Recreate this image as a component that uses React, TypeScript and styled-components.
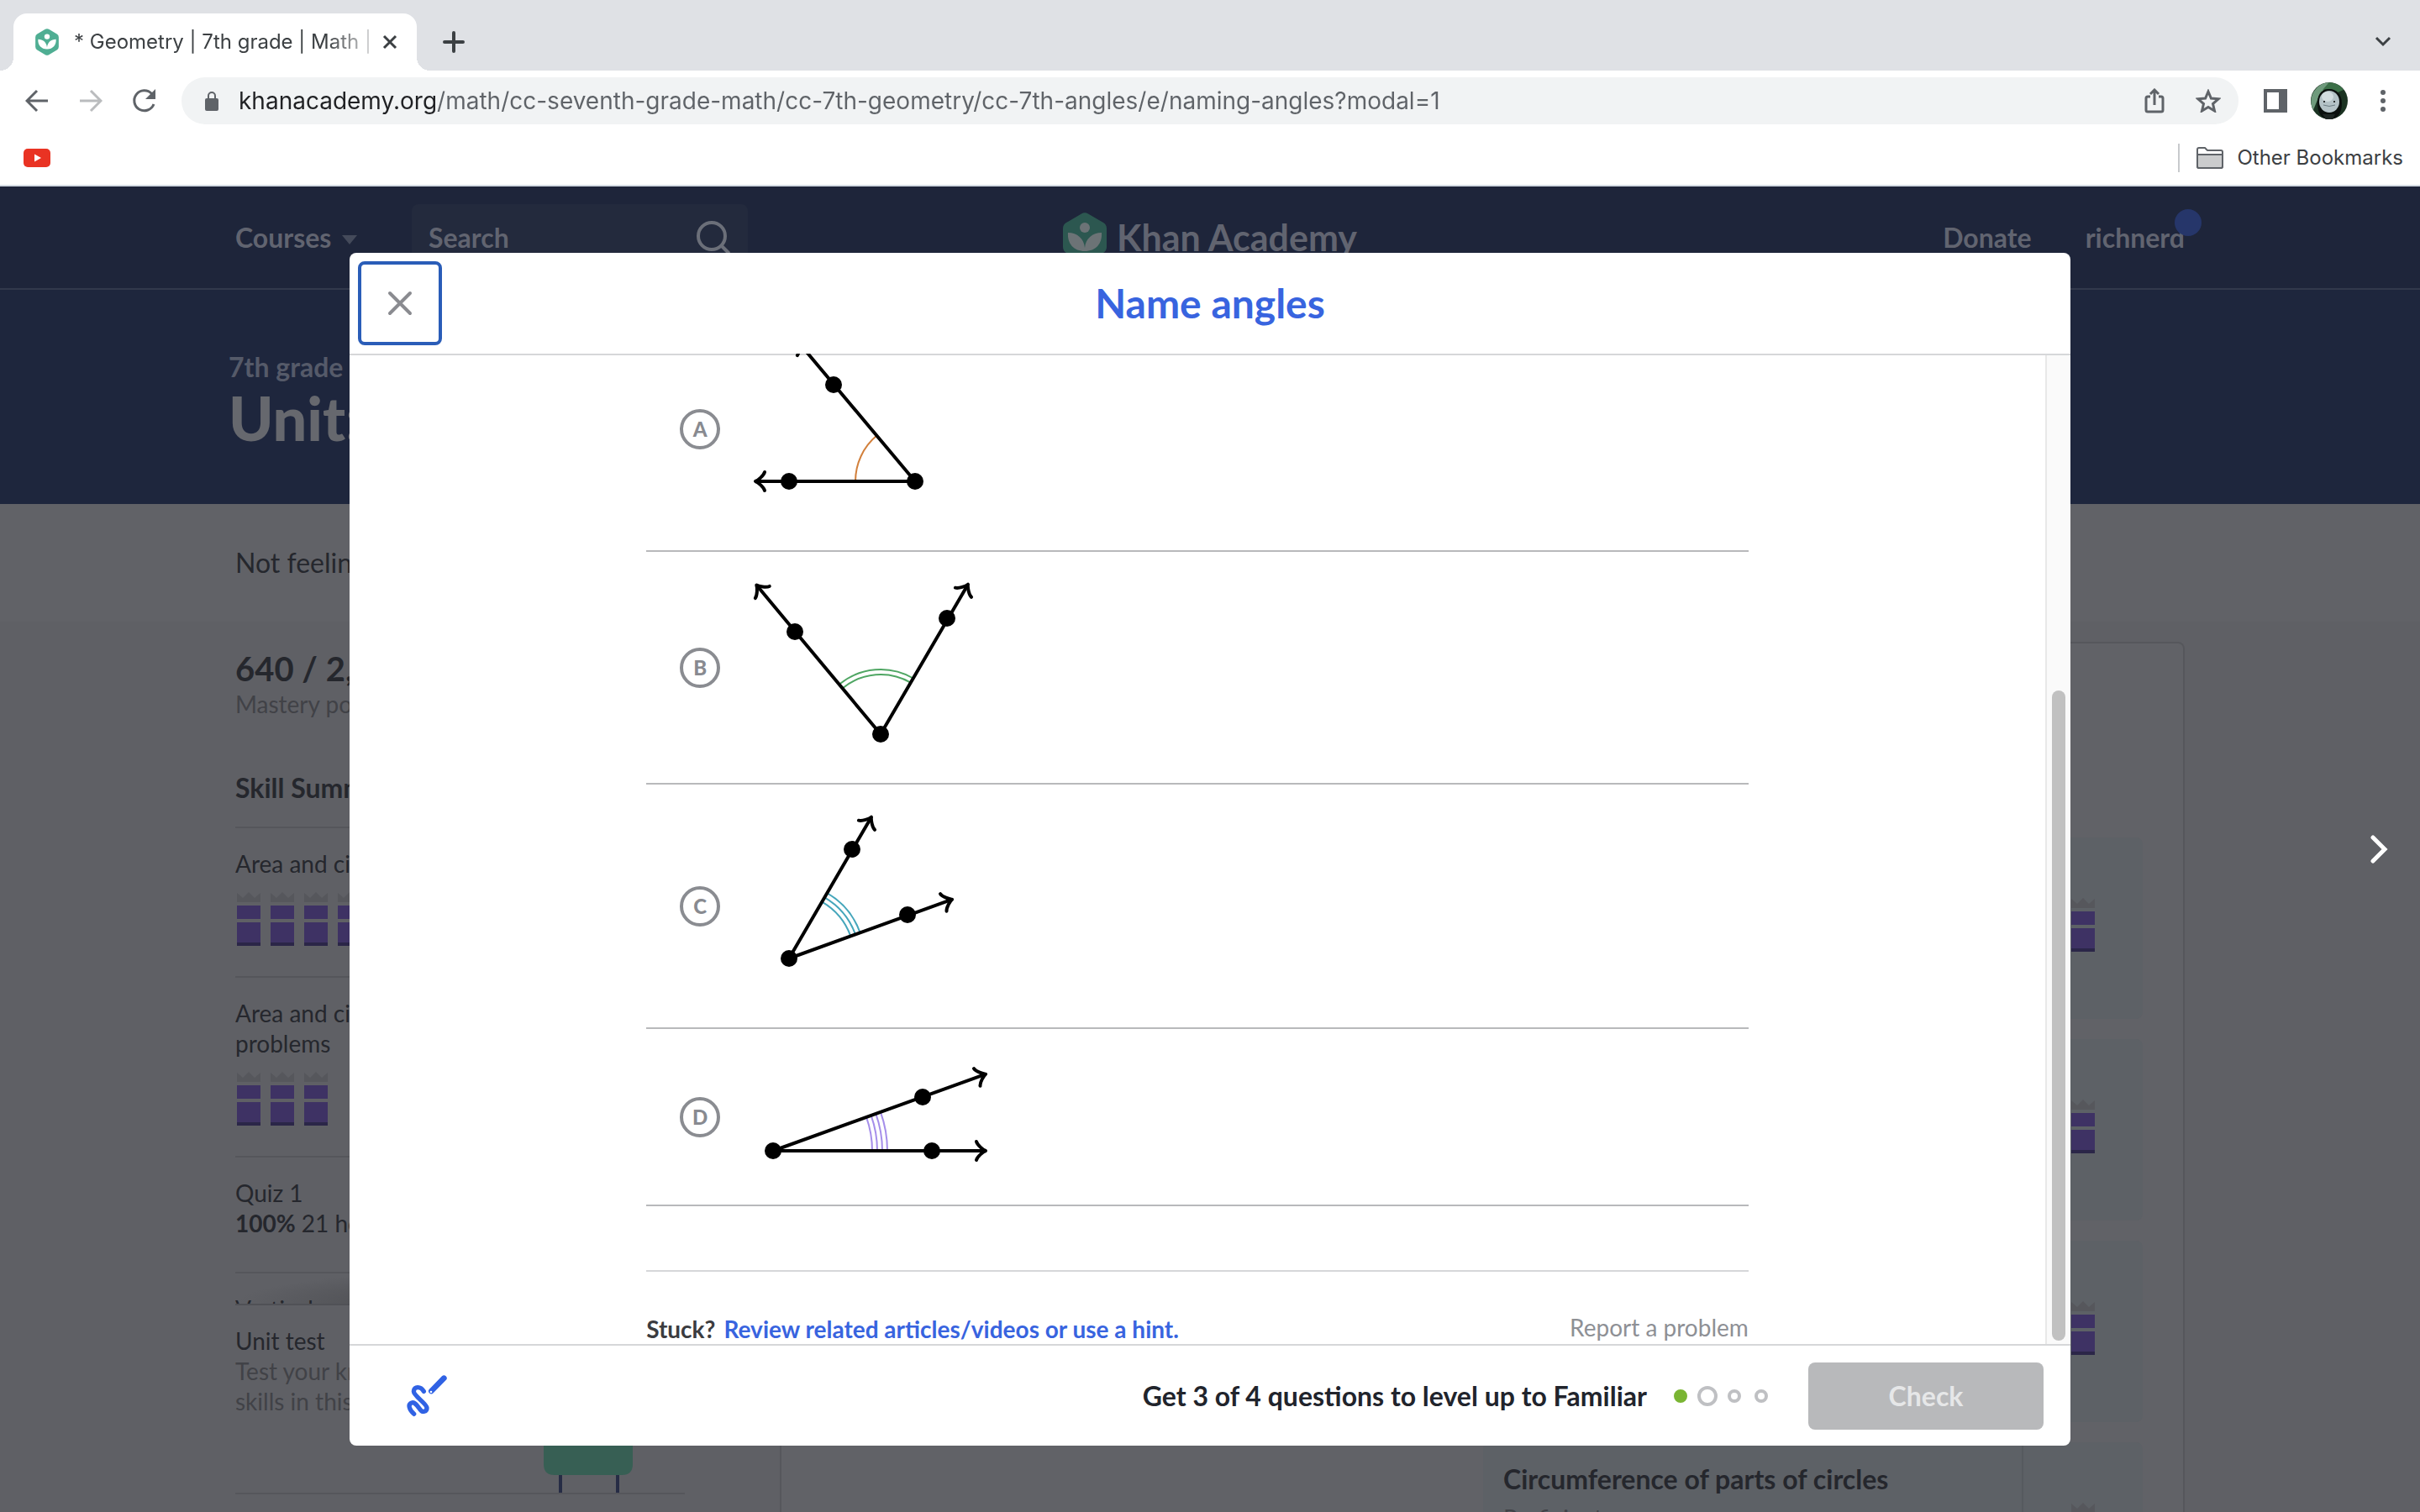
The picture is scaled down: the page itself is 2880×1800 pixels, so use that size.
import React from "react";
import styled, { createGlobalStyle } from "styled-components";

const GlobalStyle = createGlobalStyle`
  *, *::before, *::after { box-sizing: border-box; }
  html, body, #root { height: 100%; margin: 0; }
  body { font-family: Lato, "Noto Sans", sans-serif; overflow: hidden; }
  button, input { font: inherit; color: inherit; }
  button { border: 0; background: none; padding: 0; cursor: pointer; }
  h1, h2, h3, p, ul { margin: 0; padding: 0; }
  a { text-decoration: none; color: inherit; }
  svg { display: block; flex: none; }
`;

const Screen = styled.div`
  display: flex;
  flex-direction: column;
  height: 100vh;
  overflow: hidden;
`;

/* ---------- Browser chrome ---------- */

const Chrome = styled.header`
  flex: none;
  background: #fff;
  color: #3c4043;
  font-family: Inter, sans-serif;
  border-bottom: 2px solid #d5dbe3;
`;

const TabStrip = styled.div`
  display: flex;
  align-items: center;
  height: 84px;
  padding: 16px 12px 0 16px;
  background: #dfe1e5;
`;

const Tab = styled.div`
  position: relative;
  display: flex;
  align-items: center;
  width: 480px;
  height: 68px;
  padding: 0 20px 0 26px;
  border-radius: 16px 16px 0 0;
  background: #fff;
  &::before,
  &::after {
    content: "";
    position: absolute;
    bottom: 0;
    width: 16px;
    height: 16px;
  }
  &::before {
    right: 100%;
    background: radial-gradient(circle at 0 0, transparent 16px, #fff 16px);
  }
  &::after {
    left: 100%;
    background: radial-gradient(circle at 100% 0, transparent 16px, #fff 16px);
  }
`;

const TabTitle = styled.span`
  flex: 1;
  min-width: 0;
  margin-left: 18px;
  white-space: nowrap;
  font-size: 24px;
  line-height: 32px;
  mask-image: linear-gradient(90deg, #000 85%, transparent 104%);
`;

const TabClose = styled.button`
  display: grid;
  place-items: center;
  flex: none;
  width: 24px;
  height: 24px;
  margin-left: 10px;
`;

const StripButton = styled.button<{ $end?: boolean }>`
  display: grid;
  place-items: center;
  width: 64px;
  height: 64px;
  margin-left: ${(p) => (p.$end ? "auto" : "12px")};
`;

const Toolbar = styled.div`
  display: flex;
  align-items: center;
  height: 72px;
  padding: 0 12px;
`;

const ToolButton = styled.button`
  display: grid;
  place-items: center;
  flex: none;
  width: 64px;
  height: 56px;
  color: #5f6368;
`;

const AddressBar = styled.div`
  display: flex;
  flex: 1;
  align-items: center;
  height: 56px;
  margin: 0 12px;
  padding: 0 4px 0 26px;
  border-radius: 28px;
  background: #f1f3f4;
`;

const AddressInput = styled.input`
  flex: 1;
  min-width: 0;
  margin-left: 22px;
  padding: 0;
  border: 0;
  outline: 0;
  font-size: 28px;
  line-height: 40px;
  color: transparent;
  background: linear-gradient(90deg, #202124 236px, #5f6368 236px);
  background-clip: text;
  -webkit-background-clip: text;
`;

const Bookmarks = styled.nav`
  display: flex;
  align-items: center;
  justify-content: space-between;
  height: 64px;
  padding: 0 20px 0 28px;
`;

const OtherBookmarks = styled.button`
  display: flex;
  align-items: center;
  gap: 16px;
  height: 34px;
  padding-left: 20px;
  border-left: 2px solid #c8cacd;
  font-size: 24px;
  line-height: 32px;
`;

/* ---------- Dimmed course page ---------- */

const Stage = styled.div`
  position: relative;
  flex: 1;
  min-height: 0;
  overflow: hidden;
`;

const CoursePage = styled.div`
  display: flex;
  flex-direction: column;
  height: 100%;
  background: #5f6065;
  color: #25272d;
`;

const SiteNav = styled.nav`
  display: grid;
  grid-template-columns: 1fr auto 1fr;
  align-items: center;
  flex: none;
  height: 123px;
  padding: 0 280px;
  border-bottom: 2px solid #32394b;
  background: #1e253a;
  color: #616470;
  font-size: 32px;
  font-weight: 700;
  line-height: 40px;
`;

const NavLeft = styled.div`
  display: flex;
  align-items: center;
`;

const NavRight = styled.div`
  display: flex;
  justify-content: flex-end;
  gap: 64px;
`;

const CoursesButton = styled.button`
  display: flex;
  align-items: center;
  gap: 12px;
  width: 210px;
  font-weight: 700;
`;

const SearchBox = styled.label`
  display: flex;
  align-items: center;
  width: 400px;
  height: 80px;
  padding: 0 20px;
  border-radius: 8px;
  background: #232a3d;
`;

const SearchInput = styled.input`
  flex: 1;
  min-width: 0;
  padding: 0;
  border: 0;
  outline: 0;
  background: none;
  &::placeholder {
    color: #616470;
    opacity: 1;
  }
`;

const Brand = styled.a`
  display: flex;
  align-items: center;
  gap: 12px;
  font-size: 43px;
  line-height: 48px;
`;

const UserLink = styled.a`
  position: relative;
  &::after {
    content: "";
    position: absolute;
    top: -14px;
    right: -20px;
    width: 32px;
    height: 32px;
    border-radius: 50%;
    background: #26366a;
  }
`;

const Hero = styled.section`
  flex: none;
  height: 255px;
  padding: 72px 272px 0;
  background: #1e263d;
  white-space: nowrap;
`;

const Crumb = styled.a`
  display: block;
  color: #555a69;
  font-size: 32px;
  font-weight: 700;
  line-height: 40px;
`;

const HeroTitle = styled.h1`
  color: #66686e;
  font-size: 72px;
  font-weight: 900;
  line-height: 80px;
`;

const Banner = styled.p`
  flex: none;
  padding: 50px 280px;
  background: #616267;
  font-size: 32px;
  line-height: 40px;
`;

const Columns = styled.div`
  display: grid;
  grid-template-columns: 648px 1fr;
  flex: 1;
  min-height: 0;
  padding: 0 280px;
`;

const Sidebar = styled.aside`
  display: flex;
  flex-direction: column;
  min-height: 0;
  padding: 32px 113px 21px 0;
  white-space: nowrap;
`;

const Points = styled.p`
  font-size: 40px;
  font-weight: 700;
  line-height: 48px;
`;

const Muted = styled.p`
  color: #414247;
  font-size: 28px;
  line-height: 36px;
`;

const SkillHeading = styled.h2`
  margin: 64px 0 28px;
  font-size: 32px;
  line-height: 36px;
`;

const SkillList = styled.ul`
  flex: 1;
  min-height: 0;
  overflow: hidden;
  list-style: none;
  background: radial-gradient(ellipse 60% 40px at 60% 100%, #4d4e52 30%, transparent);
`;

const Skill = styled.li<{ $quiz?: boolean }>`
  padding: 24px 0 ${(p) => (p.$quiz ? "40px" : "36px")};
  border-top: 2px solid #55565b;
  font-size: 28px;
  line-height: 36px;
`;

const Blocks = styled.div`
  display: flex;
  gap: 12px;
  margin: 16px 0 0 2px;
`;

const UnitTest = styled.div`
  display: flex;
  flex: none;
  justify-content: space-between;
  height: 227px;
  padding: 24px 62px 0 0;
  border-top: 2px solid #505156;
  border-bottom: 2px solid #55565b;
  font-size: 28px;
  line-height: 36px;
`;

const Creature = styled.svg`
  align-self: flex-end;
`;

const LessonCard = styled.section`
  display: flex;
  flex-direction: column;
  align-items: flex-end;
  gap: 24px;
  margin-top: 24px;
  padding: 231px 48px 0 0;
  border: 2px solid #56575c;
  border-bottom: 0;
  border-radius: 8px 8px 0 0;
  background: #616267;
  overflow: hidden;
`;

const Lesson = styled.article`
  display: grid;
  grid-template-columns: 1fr 142px;
  flex: none;
  width: 785px;
  height: 216px;
  border-radius: 8px;
  background: #5d6166;
`;

const LessonText = styled.div`
  padding: 24px;
  border-right: 2px solid #565a5f;
`;

const LessonTitle = styled.h3`
  margin-bottom: 8px;
  font-size: 32px;
  line-height: 40px;
`;

const LessonLevel = styled.div`
  display: grid;
  justify-content: center;
  padding-top: 72px;
`;

/* ---------- Exercise dialog ---------- */

const Overlay = styled.div`
  position: absolute;
  inset: 0;
  display: flex;
  padding: 79px 416px;
`;

const Dialog = styled.section`
  display: flex;
  flex: 1;
  flex-direction: column;
  min-width: 0;
  border-radius: 8px;
  background: #fff;
  overflow: hidden;
`;

const DialogHeader = styled.header`
  display: grid;
  grid-template-columns: 1fr auto 1fr;
  align-items: center;
  flex: none;
  height: 120px;
  padding: 0 10px;
`;

const CloseButton = styled.button`
  display: grid;
  place-items: center;
  width: 100px;
  height: 100px;
  border: 4px solid #2a5db8;
  border-radius: 8px;
`;

const DialogTitle = styled.h1`
  color: #3864df;
  font-size: 48px;
  line-height: 56px;
`;

const DialogBody = styled.div`
  display: flex;
  flex: 1;
  min-height: 0;
  box-shadow: inset 0 2px #d6d7d9;
  overflow: hidden;
`;

const Scroller = styled.div`
  display: flex;
  flex: 1;
  flex-direction: column;
  justify-content: flex-end;
  min-width: 0;
`;

const Content = styled.form`
  width: 65%;
  margin: 0 auto;
`;

const Choice = styled.label`
  display: flex;
  align-items: center;
  gap: 24px;
  padding: 36px 40px;
  border-bottom: 2px solid #b8b9bb;
`;

const Letter = styled.span`
  display: grid;
  place-items: center;
  color: #888a90;
  font-size: 24px;
  font-weight: 900;
  line-height: 28px;
  & > * {
    grid-area: 1 / 1;
  }
`;

const Radio = styled.input`
  appearance: none;
  width: 48px;
  height: 48px;
  margin: 0;
  border: 4px solid #8a8c91;
  border-radius: 50%;
`;

const HelpRow = styled.div`
  display: flex;
  align-items: flex-start;
  justify-content: space-between;
  margin-top: 76px;
  padding-top: 48px;
  border-top: 2px solid #d6d7d9;
  font-size: 28px;
  line-height: 36px;
`;

const Stuck = styled.p`
  display: flex;
  gap: 10px;
  padding-top: 2px;
  color: #3b3c40;
  font-weight: 700;
`;

const HintLink = styled.a`
  color: #3864df;
`;

const ReportLink = styled.a`
  color: #8e9095;
`;

const ScrollTrack = styled.div`
  display: flex;
  flex-direction: column;
  justify-content: flex-end;
  align-items: center;
  width: 30px;
  margin-top: 2px;
  padding-bottom: 4px;
  border-left: 2px solid #e8e8e8;
  background: #fafafa;
`;

const ScrollThumb = styled.div`
  width: 16px;
  height: 66%;
  border-radius: 8px;
  background: #c1c1c1;
`;

const DialogFooter = styled.footer`
  display: flex;
  align-items: center;
  flex: none;
  height: 121px;
  padding: 0 32px 0 66px;
  border-top: 2px solid #d6d7d9;
`;

const Goal = styled.p`
  margin-left: auto;
  color: #21242c;
  font-size: 32px;
  font-weight: 700;
  line-height: 40px;
`;

const Progress = styled.div`
  display: grid;
  grid-template-columns: repeat(4, 24px);
  place-items: center;
  gap: 8px;
  margin: 0 44px 0 28px;
`;

const Dot = styled.span<{ $state: "done" | "current" | "todo" }>`
  width: ${(p) => (p.$state === "current" ? "24px" : "16px")};
  height: ${(p) => (p.$state === "current" ? "24px" : "16px")};
  border: 4px solid ${(p) => (p.$state === "done" ? "#7ab533" : "#bfc0c3")};
  border-radius: 50%;
  background: ${(p) => (p.$state === "done" ? "#7ab533" : "#fff")};
`;

const CheckButton = styled.button`
  width: 280px;
  height: 80px;
  border-radius: 8px;
  background: #b8b9bb;
  color: #e6e7e8;
  font-size: 32px;
  font-weight: 700;
  line-height: 40px;
`;

const NextButton = styled.button`
  position: absolute;
  top: 50%;
  right: 32px;
  transform: translateY(-50%);
`;

/* ---------- Drawings ---------- */

type Pt = [number, number];

function Ray({ from, tip }: { from: Pt; tip: Pt }) {
  const dx = tip[0] - from[0];
  const dy = tip[1] - from[1];
  const len = Math.hypot(dx, dy);
  const angle = (Math.atan2(dy, dx) * 180) / Math.PI;
  return (
    <g
      transform={`translate(${from[0]} ${from[1]}) rotate(${angle})`}
      fill="none"
      stroke="#000"
      strokeWidth="4"
      strokeLinecap="round"
      strokeLinejoin="round"
    >
      <path d={`M0 0H${len - 4}`} />
      <path
        transform={`translate(${len - 2} 0)`}
        d="M-11 -11C-10 -7 -3 -1 0 0C-3 1 -10 7 -11 11"
      />
    </g>
  );
}

type AngleProps = {
  top: number;
  height: number;
  vertex: Pt;
  points: [Pt, Pt];
  tips: [Pt, Pt];
  radii: number[];
  color: string;
};

function Angle({ top, height, vertex, points, tips, radii, color }: AngleProps) {
  const [a, b] = tips.map((t) => Math.atan2(t[1] - vertex[1], t[0] - vertex[0]));
  const at = (r: number, t: number) =>
    `${vertex[0] + r * Math.cos(t)} ${vertex[1] + r * Math.sin(t)}`;
  return (
    <svg width="320" height={height} viewBox={`881 ${top} 320 ${height}`} aria-hidden="true">
      {radii.map((r) => (
        <path
          key={r}
          d={`M${at(r, a)}A${r} ${r} 0 0 1 ${at(r, b)}`}
          fill="none"
          stroke={color}
          strokeWidth="2"
        />
      ))}
      {tips.map((t, i) => (
        <Ray key={i} from={vertex} tip={t} />
      ))}
      {[vertex, ...points].map((p, i) => (
        <circle key={i} cx={p[0]} cy={p[1]} r="10" />
      ))}
    </svg>
  );
}

const choices: (AngleProps & { letter: string })[] = [
  {
    letter: "A", top: 402, height: 217, vertex: [1089, 573],
    points: [[939, 573], [992, 458]], tips: [[897, 573], [949, 406]],
    radii: [71], color: "#d2803c",
  },
  {
    letter: "B", top: 693, height: 203, vertex: [1048, 874],
    points: [[946, 752], [1127, 736]], tips: [[899, 695], [1153, 694]],
    radii: [71, 77], color: "#4fa663",
  },
  {
    letter: "C", top: 970, height: 217, vertex: [939, 1141],
    points: [[1014, 1011], [1080, 1089]], tips: [[1038, 971], [1135, 1070]],
    radii: [78, 84, 90], color: "#45a6bb",
  },
  {
    letter: "D", top: 1261, height: 137, vertex: [920, 1370],
    points: [[1098, 1306], [1109, 1370]], tips: [[1175, 1278], [1175, 1370]],
    radii: [118, 124, 130, 136], color: "#a58eea",
  },
];

function Leaf({ width, height, dim }: { width: number; height: number; dim?: boolean }) {
  const ink = dim ? "#6c7376" : "#fff";
  return (
    <svg width={width} height={height} viewBox="0 0 52 60" aria-hidden="true">
      <path
        d="M22 1.5q4-2.4 8 0l18 10.5q4 2.4 4 7v22q0 4.600-4 7L30 58.500q-4 2.400-8 0L4 48q-4-2.400-4-7V19q0-4.600 4-7z"
        fill={dim ? "#2c5750" : "#4fae93"}
      />
      <circle cx="26" cy="18" r="6" fill={ink} />
      <path d="M6 24c11 0 19 7 20 18c1-11 9-18 20-18c1 13-7 22-20 22S5 37 6 24z" fill={ink} />
    </svg>
  );
}

function Block() {
  return (
    <svg width="28" height="64" viewBox="0 0 28 64" aria-hidden="true">
      <path d="M0 1l7 6 7-7 7 7 7-6v11H0z" fill="#56575c" />
      <path d="M0 16h28v16H0zM0 36h28v24H0z" fill="#3e3264" />
      <path d="M0 60h28v4H0z" fill="#2b2648" />
    </svg>
  );
}

export default function App() {
  return (
    <Screen>
      <GlobalStyle />
      <Chrome>
        <TabStrip>
          <Tab>
            <Leaf width={28} height={32} />
            <TabTitle>* Geometry | 7th grade | Math |</TabTitle>
            <TabClose aria-label="Close tab">
              <svg width="18" height="18" viewBox="0 0 18 18" stroke="#3c4043" strokeWidth="3">
                <path d="M2 2l14 14M16 2L2 16" />
              </svg>
            </TabClose>
          </Tab>
          <StripButton aria-label="New tab">
            <svg width="26" height="26" viewBox="0 0 26 26" stroke="#3c4043" strokeWidth="4" strokeLinecap="round">
              <path d="M13 2v22M2 13h22" />
            </svg>
          </StripButton>
          <StripButton $end aria-label="Search tabs">
            <svg width="20" height="14" viewBox="0 0 20 14" fill="none" stroke="#3c4043" strokeWidth="3">
              <path d="M2 2l8 8 8-8" />
            </svg>
          </StripButton>
        </TabStrip>
        <Toolbar>
          <ToolButton aria-label="Back">
            <svg width="28" height="28" viewBox="0 0 28 28" fill="none" stroke="#5f6368" strokeWidth="3">
              <path d="M27 14H3M14 2L2 14l12 12" />
            </svg>
          </ToolButton>
          <ToolButton aria-label="Forward">
            <svg width="28" height="28" viewBox="0 0 28 28" fill="none" stroke="#babcbe" strokeWidth="3">
              <path d="M1 14h24M14 2l12 12-12 12" />
            </svg>
          </ToolButton>
          <ToolButton aria-label="Reload">
            <svg width="30" height="30" viewBox="0 0 30 30" fill="none" stroke="#5f6368" strokeWidth="3">
              <path d="M26 19A12 12 0 1 1 23.500 6.500" />
              <path d="M28 1v12H16z" fill="#5f6368" stroke="none" />
            </svg>
          </ToolButton>
          <AddressBar>
            <svg width="20" height="24" viewBox="0 0 20 24" fill="none">
              <rect x="2" y="9" width="16" height="15" rx="2" fill="#5f6368" />
              <path d="M6 10V6a4 4 0 0 1 8 0v4" stroke="#5f6368" strokeWidth="2" />
            </svg>
            <AddressInput
              aria-label="Address"
              readOnly
              value="khanacademy.org/math/cc-seventh-grade-math/cc-7th-geometry/cc-7th-angles/e/naming-angles?modal=1"
            />
            <ToolButton aria-label="Share">
              <svg width="24" height="30" viewBox="0 0 24 30" fill="none" stroke="#5f6368" strokeWidth="3">
                <path d="M7 10H4a2 2 0 0 0-2 2v14a2 2 0 0 0 2 2h16a2 2 0 0 0 2-2V12a2 2 0 0 0-2-2h-3M12 20V3M7 7l5-5 5 5" />
              </svg>
            </ToolButton>
            <ToolButton aria-label="Bookmark this page">
              <svg width="30" height="28" viewBox="0 0 30 28" fill="none" stroke="#5f6368" strokeWidth="3">
                <path d="M15 3l3.400 8 8.600.8-6.500 5.700 2 8.500-7.500-4.500L7.500 26l2-8.500L3 11.800l8.600-.8z" />
              </svg>
            </ToolButton>
          </AddressBar>
          <ToolButton aria-label="Side panel">
            <svg width="28" height="28" viewBox="0 0 28 28">
              <path d="M0 0h28v28H0z M4 4v20h14V4z" fill="#5f6368" fillRule="evenodd" />
            </svg>
          </ToolButton>
          <ToolButton aria-label="Profile">
            <svg width="44" height="44" viewBox="0 0 44 44">
              <circle cx="22" cy="22" r="22" fill="#1b3322" />
              <path d="M6 8A22 22 0 0 1 22 0L10 16 3 33A22 22 0 0 1 6 8z" fill="#6f9a7c" />
              <path d="M22 0Q34 1 39 9L32 12Q26 6 14 9z" fill="#3c7048" />
              <path d="M8 24C8 12 15 8 22 8s15 5 15 17-5 19-15 19S8 36 8 24z" fill="#0b100e" />
              <ellipse cx="22" cy="23" rx="12" ry="13" fill="#b4c2c7" />
              <ellipse cx="20" cy="17" rx="7" ry="6" fill="#d3dde0" />
              <circle cx="16" cy="23" r="1" />
              <circle cx="28" cy="23" r="1" />
              <path d="M15 27q7 3 14 0" fill="none" stroke="#6d7d84" strokeWidth="1" />
              <path d="M14 38h15l-3 6h-8z" fill="#1d2422" />
            </svg>
          </ToolButton>
          <ToolButton aria-label="Menu">
            <svg width="6" height="26" viewBox="0 0 6 26" fill="#5f6368">
              <circle cx="3" cy="3" r="3" />
              <circle cx="3" cy="13" r="3" />
              <circle cx="3" cy="23" r="3" />
            </svg>
          </ToolButton>
        </Toolbar>
        <Bookmarks>
          <a href="#youtube" aria-label="YouTube">
            <svg width="32" height="22" viewBox="0 0 32 22">
              <rect width="32" height="22" rx="5" fill="#e93323" />
              <path d="M13 6.500l8 4.500-8 4.500z" fill="#fff" />
            </svg>
          </a>
          <OtherBookmarks>
            <svg width="32" height="26" viewBox="0 0 32 26" stroke="#5f6368" strokeWidth="2">
              <path d="M1 23V3q0-2 2-2h7l3 3h16q2 0 2 2v17q0 2-2 2H3q-2 0-2-2z" fill="#fff" />
              <path d="M1 9h30v14q0 2-2 2H3q-2 0-2-2z" fill="#cbcccd" />
            </svg>
            Other Bookmarks
          </OtherBookmarks>
        </Bookmarks>
      </Chrome>

      <Stage>
        <CoursePage>
          <SiteNav>
            <NavLeft>
              <CoursesButton>
                Courses
                <svg width="20" height="18" viewBox="0 0 20 18" fill="#444a5a">
                  <path d="M1 6h18l-9 11z" />
                </svg>
              </CoursesButton>
              <SearchBox>
                <SearchInput type="text" placeholder="Search" aria-label="Search" />
                <svg width="42" height="42" viewBox="0 0 42 42" fill="none" stroke="#6b6f79" strokeWidth="4" strokeLinecap="round">
                  <circle cx="19" cy="19" r="16" />
                  <path d="M31 31l8 8" />
                </svg>
              </SearchBox>
            </NavLeft>
            <Brand href="#home">
              <Leaf width={52} height={60} dim />
              Khan Academy
            </Brand>
            <NavRight>
              <a href="#donate">Donate</a>
              <UserLink href="#profile">richnerd</UserLink>
            </NavRight>
          </SiteNav>
          <Hero>
            <Crumb href="#grade">7th grade</Crumb>
            <HeroTitle>Unit:</HeroTitle>
          </Hero>
          <Banner>Not feeling</Banner>
          <Columns>
            <Sidebar>
              <Points>640 / 2,</Points>
              <Muted>Mastery poi</Muted>
              <SkillHeading>Skill Summ</SkillHeading>
              <SkillList>
                <Skill>
                  Area and cir
                  <Blocks>
                    <Block />
                    <Block />
                    <Block />
                    <Block />
                  </Blocks>
                </Skill>
                <Skill>
                  Area and cir
                  <br />
                  problems
                  <Blocks>
                    <Block />
                    <Block />
                    <Block />
                  </Blocks>
                </Skill>
                <Skill $quiz>
                  Quiz 1
                  <br />
                  <b>100%</b> 21 ho
                </Skill>
                <Skill>Vertical</Skill>
              </SkillList>
              <UnitTest>
                <div>
                  Unit test
                  <Muted>Test your kn</Muted>
                  <Muted>skills in this</Muted>
                </div>
                <Creature width="106" height="90" viewBox="0 0 106 90" aria-hidden="true">
                  <path d="M20 66v24M88 66v24" stroke="#262c45" strokeWidth="4" />
                  <path d="M0 0h106v56q0 13-13 13H13Q0 69 0 56z" fill="#375f54" />
                </Creature>
              </UnitTest>
            </Sidebar>
            <LessonCard>
              {["", "", "", "Circumference of parts of circles"].map((title, i) => (
                <Lesson key={i}>
                  <LessonText>
                    {title && <LessonTitle>{title}</LessonTitle>}
                    {title && <Muted>Proficient</Muted>}
                  </LessonText>
                  <LessonLevel>
                    <Block />
                  </LessonLevel>
                </Lesson>
              ))}
            </LessonCard>
          </Columns>
        </CoursePage>

        <Overlay>
          <Dialog role="dialog" aria-labelledby="dialog-title">
            <DialogHeader>
              <CloseButton aria-label="Close">
                <svg width="30" height="30" viewBox="0 0 30 30" stroke="#8a8b90" strokeWidth="4" strokeLinecap="round">
                  <path d="M3 3l24 24M27 3L3 27" />
                </svg>
              </CloseButton>
              <DialogTitle id="dialog-title">Name angles</DialogTitle>
            </DialogHeader>
            <DialogBody>
              <Scroller>
                <Content>
                  {choices.map(({ letter, ...angle }) => (
                    <Choice key={letter}>
                      <Letter>
                        <Radio type="radio" name="answer" value={letter} />
                        <span>{letter}</span>
                      </Letter>
                      <Angle {...angle} />
                    </Choice>
                  ))}
                  <HelpRow>
                    <Stuck>
                      Stuck?
                      <HintLink href="#hint">Review related articles/videos or use a hint.</HintLink>
                    </Stuck>
                    <ReportLink href="#report">Report a problem</ReportLink>
                  </HelpRow>
                </Content>
              </Scroller>
              <ScrollTrack>
                <ScrollThumb />
              </ScrollTrack>
            </DialogBody>
            <DialogFooter>
              <button aria-label="Scratchpad">
                <svg width="52" height="52" viewBox="36 34 156 156" fill="none" stroke="#3062e4" strokeLinecap="round">
                  <path
                    d="M103 95C92 76 68 76 67 95C67 112 113 138 114 154C114 168 98 172 90 160C80 148 72 132 60 136C44 142 52 162 68 176"
                    strokeWidth="16"
                  />
                  <path d="M130 94L175 48" strokeWidth="20" />
                  <circle cx="129" cy="97" r="4" fill="#fff" stroke="none" />
                </svg>
              </button>
              <Goal>Get 3 of 4 questions to level up to Familiar</Goal>
              <Progress role="img" aria-label="1 of 4 questions done">
                <Dot $state="done" />
                <Dot $state="current" />
                <Dot $state="todo" />
                <Dot $state="todo" />
              </Progress>
              <CheckButton disabled>Check</CheckButton>
            </DialogFooter>
          </Dialog>
          <NextButton aria-label="Next exercise">
            <svg width="32" height="40" viewBox="0 0 32 40" fill="none" stroke="#fff" strokeWidth="5" strokeLinecap="round">
              <path d="M8 6l14 14L8 34" />
            </svg>
          </NextButton>
        </Overlay>
      </Stage>
    </Screen>
  );
}
